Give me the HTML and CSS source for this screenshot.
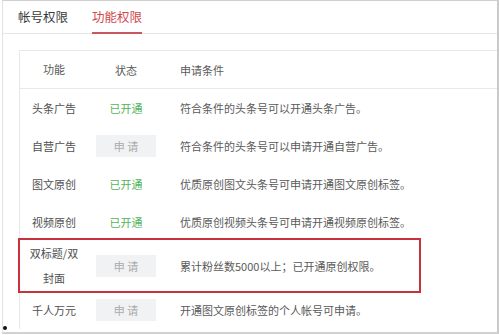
FILE: index.html
```html
<!DOCTYPE html>
<html lang="zh">
<head>
<meta charset="utf-8">
<link rel="stylesheet" href="styles.css">
</head>
<body>
<div class="frame">
  <div class="tabs">
    <div class="tab">帐号权限</div>
    <div class="tab active">功能权限</div>
  </div>
  <div class="table">
    <div class="row head">
      <div class="c1">功能</div>
      <div class="c2">状态</div>
      <div class="c3">申请条件</div>
    </div>
    <div class="row">
      <div class="c1">头条广告</div>
      <div class="c2"><span class="ok">已开通</span></div>
      <div class="c3">符合条件的头条号可以开通头条广告。</div>
    </div>
    <div class="row">
      <div class="c1">自营广告</div>
      <div class="c2"><span class="btn">申 请</span></div>
      <div class="c3">符合条件的头条号可以申请开通自营广告。</div>
    </div>
    <div class="row">
      <div class="c1">图文原创</div>
      <div class="c2"><span class="ok">已开通</span></div>
      <div class="c3">优质原创图文头条号可申请开通图文原创标签。</div>
    </div>
    <div class="row">
      <div class="c1">视频原创</div>
      <div class="c2"><span class="ok">已开通</span></div>
      <div class="c3">优质原创视频头条号可申请开通视频原创标签。</div>
    </div>
    <div class="row tall">
      <div class="c1">双标题/双封面</div>
      <div class="c2"><span class="btn">申 请</span></div>
      <div class="c3">累计粉丝数5000以上；已开通原创权限。</div>
      <div class="mark"></div>
    </div>
    <div class="row">
      <div class="c1">千人万元</div>
      <div class="c2"><span class="btn">申 请</span></div>
      <div class="c3">开通图文原创标签的个人帐号可申请。</div>
    </div>
  </div>
</div>
<span class="dot"></span>
</body>
</html>
```
FILE: styles.css
```css
html, body {
  margin: 0;
  padding: 0;
  background: #fff;
}
body {
  font-family: "Noto Sans CJK SC", "Noto Sans", sans-serif;
  position: relative;
  width: 499px;
  height: 335px;
  overflow: hidden;
}
.frame {
  box-sizing: border-box;
  width: 497px;
  height: 334px;
  margin-left: 2px;
  border-top: 1px solid #cfcfcf;
  border-right: 2px solid #cacaca;
  border-bottom: 2px solid #d2d2d2;
  border-left: 1px solid #e2e2e2;
  overflow: hidden;
}
.tabs {
  display: flex;
  gap: 24px;
  height: 32px;
  padding-left: 15px;
  border-bottom: 1px solid #e6e6e6;
}
.tab {
  font-size: 12.5px;
  line-height: 32px;
  color: #3a3a3a;
}
.tab.active {
  color: #d0474e;
  border-bottom: 2px solid #c9585c;
  margin-bottom: -1px;
  box-sizing: border-box;
  height: 33px;
}
.table {
  margin: 16px 0 0 16px;
  border-left: 1px solid #e8e8e8;
  border-top: 1px solid #e8e8e8;
}
.row {
  display: grid;
  grid-template-columns: 68px 76px 1fr;
  align-items: center;
  height: 38px;
  font-size: 11px;
  color: #505050;
}
.row.head {
  height: 37px;
  border-bottom: 1px solid #e8e8e8;
  color: #5a5a5a;
}
.row.tall {
  height: 50px;
  position: relative;
}
.c1 {
  text-align: center;
  padding: 0 8px;
  line-height: 25px;
}
.c2 {
  display: flex;
  justify-content: center;
}
.c3 {
  padding-left: 16px;
  color: #5a5a5a;
  white-space: nowrap;
}
.ok {
  color: #55b55b;
}
.btn {
  display: block;
  width: 60px;
  height: 22px;
  line-height: 22px;
  text-align: center;
  background: #f1f2f3;
  color: #ababab;
}
.mark {
  position: absolute;
  left: -2px;
  top: -3px;
  width: 403px;
  height: 55px;
  box-sizing: border-box;
  border: 2px solid #c8323c;
}
.dot {
  position: absolute;
  left: 3px;
  top: 326px;
  width: 4px;
  height: 4px;
  border-radius: 50%;
  background: #111;
}
```
